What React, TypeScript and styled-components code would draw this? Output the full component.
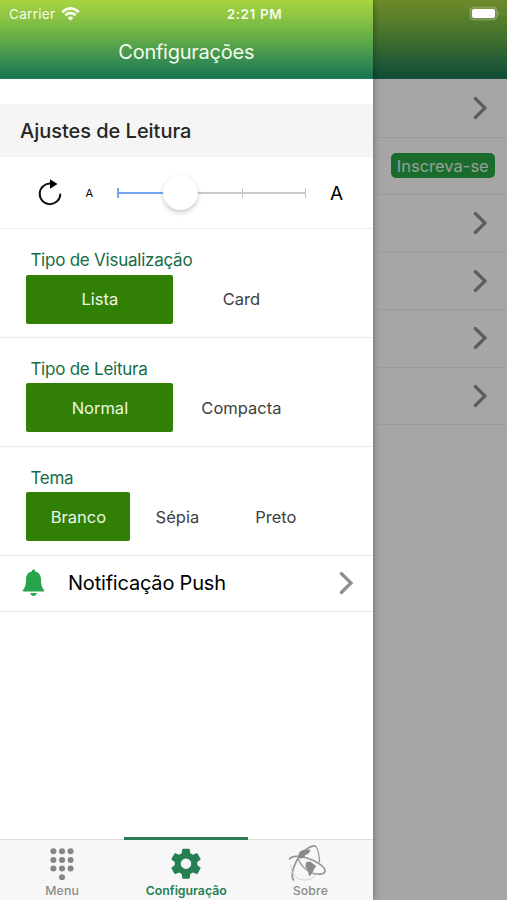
import React from 'react';
import styled, { createGlobalStyle, css } from 'styled-components';

const Global = createGlobalStyle`
  * { box-sizing: border-box; }
  body { margin: 0; background: #fff; font-family: Inter, "Liberation Sans", sans-serif; }
`;

const headerGradient = css`
  background: linear-gradient(180deg, #a9d43f 0%, #8ec643 20%, #62ab48 50%, #338a52 80%, #187650 98%, #2c8060 100%);
`;

const Screen = styled.div`
  position: relative;
  display: grid;
  grid-template-columns: 372.5px 1fr;
  height: 900px;
  width: 507px;
  overflow: hidden;
`;

const StatusBar = styled.div`
  position: absolute;
  inset: 0 0 auto 0;
  z-index: 3;
  height: 27px;
  display: grid;
  grid-template-columns: 1fr auto 1fr;
  align-items: center;
  padding: 0 7px 0 9px;
  color: #f6fbe8;
  font-size: 13.5px;
`;

const Carrier = styled.div`
  display: flex;
  align-items: center;
  gap: 6px;
  letter-spacing: 0.3px;
`;

const Clock = styled.div`
  font-weight: 600;
  font-size: 13.5px;
  letter-spacing: 0.6px;
`;

const Battery = styled.div`
  justify-self: end;
  display: flex;
`;

const Drawer = styled.div`
  position: relative;
  z-index: 2;
  background: #fff;
  display: flex;
  flex-direction: column;
  box-shadow: 0 0 7px rgba(0, 0, 0, 0.4);
`;

const Header = styled.header`
  ${headerGradient}
  height: 79px;
  flex: none;
  padding-top: 25px;
  display: flex;
  align-items: center;
  justify-content: center;
  color: #f4fae9;
  font-size: 20px;
`;

const Title = styled.span<{ $track?: number }>`
  letter-spacing: ${p => p.$track ?? 0}px;
  white-space: nowrap;
`;

const Content = styled.main`
  flex: 1;
  padding-top: 25px;
`;

const SectionHeading = styled.div`
  height: 53px;
  background: #f5f5f5;
  padding: 0 20px;
  display: flex;
  align-items: center;
  font-size: 20px;
  font-weight: 500;
  color: #262626;
`;

const FontRow = styled.div`
  height: 72px;
  border-bottom: 1px solid #ededed;
  display: grid;
  grid-template-columns: 24px 31px 237px auto;
  justify-content: start;
  align-items: center;
  padding: 1px 0 0 38px;
`;

const Letter = styled.span<{ $size: number }>`
  font-size: ${p => p.$size}px;
  color: #000;
  justify-self: end;
`;

const Track = styled.div`
  position: relative;
  width: 189px;
  height: 40px;
  margin-left: 24px;
  display: flex;
  align-items: center;
`;

const Segment = styled.div<{ $active?: boolean }>`
  flex: 1;
  height: 2px;
  background: ${p => (p.$active ? '#74a5f5' : '#cbcbcb')};
`;

const Tick = styled.div<{ $active?: boolean }>`
  width: 1.5px;
  height: 10px;
  background: ${p => (p.$active ? '#74a5f5' : '#c4c4c4')};
`;

const Knob = styled.div`
  position: absolute;
  left: 46px;
  top: 2px;
  width: 35px;
  height: 35px;
  border-radius: 50%;
  background: #fff;
  box-shadow: 0 3px 5px rgba(0, 0, 0, 0.18), 0 0 3px rgba(0, 0, 0, 0.06);
`;

const Group = styled.section`
  height: 108.9px;
  border-bottom: 1px solid #ebebeb;
  padding: 20px 26.4px 0;
`;

const GroupLabel = styled.div`
  height: 25.5px;
  padding-left: 4px;
  font-size: 17px;
  line-height: 23px;
  letter-spacing: -0.24px;
  color: #176b45;
`;

const Options = styled.div`
  display: flex;
`;

const Option = styled.button<{ $width: number; $selected?: boolean }>`
  width: ${p => p.$width}px;
  height: 49px;
  border: 0;
  border-radius: 2px;
  padding: 0;
  font: inherit;
  font-size: 16.5px;
  background: ${p => (p.$selected ? '#318005' : 'transparent')};
  color: ${p => (p.$selected ? '#eef6e8' : '#404040')};
`;

const PushRow = styled.div`
  height: 56px;
  border-bottom: 1px solid #ebebeb;
  display: flex;
  align-items: center;
  padding: 0 19px 0 22px;
  font-size: 20px;
  color: #000;
`;

const PushLabel = styled.span`
  flex: 1;
  margin-left: 22px;
  letter-spacing: -0.2px;
  white-space: nowrap;
`;

const TabBar = styled.nav`
  flex: none;
  height: 61px;
  display: grid;
  grid-template-columns: repeat(3, 1fr);
  background: #f7f7f7;
  border-top: 1px solid #dcdcdc;
`;

const Tab = styled.div<{ $active?: boolean }>`
  position: relative;
  display: flex;
  flex-direction: column;
  align-items: center;
  justify-content: flex-end;
  padding-bottom: 2px;
  font-size: 12.3px;
  line-height: 15px;
  font-weight: ${p => (p.$active ? 600 : 500)};
  color: ${p => (p.$active ? '#248052' : '#8c8c8c')};
  &::before {
    content: '';
    position: absolute;
    inset: -3px 0 auto 0;
    height: 3px;
    background: ${p => (p.$active ? '#2f7d54' : 'transparent')};
  }
`;

const TabLabel = styled.span`
  letter-spacing: 0.1px;
`;

const Page = styled.div`
  position: relative;
  background: #fff;
`;

const PageHeader = styled.div`
  ${headerGradient}
  height: 79px;
`;

const PageList = styled.div`
  padding-top: 1px;
`;

const PageRow = styled.div`
  height: 57.5px;
  border-bottom: 1px solid #f0f0f0;
  display: flex;
  align-items: center;
  justify-content: flex-end;
  padding: 0 19px 0 0;
`;

const BadgeRow = styled(PageRow)`
  padding-right: 12px;
`;

const Badge = styled.span`
  width: 104.5px;
  height: 25px;
  border-radius: 5px;
  background: #28a745;
  color: #e9f3e6;
  display: flex;
  align-items: center;
  justify-content: center;
  font-size: 16.5px;
`;

const Backdrop = styled.div`
  position: absolute;
  inset: 0;
  background: rgba(0, 0, 0, 0.35);
`;

const Chevron = () => (
  <svg width="15" height="24" viewBox="0 0 15 24" fill="none" stroke="#8f8f8f" strokeWidth="3.2">
    <path d="M2.3 2.5 12 12 2.3 21.5" strokeLinecap="round" />
  </svg>
);

const Wifi = () => (
  <svg width="19" height="14" viewBox="0 0 19 14" fill="none" stroke="#f8fcec" strokeWidth="2.8">
    <path d="M1.2 5.1Q9.5-2.3 17.8 5.1" />
    <path d="M4.2 8.3Q9.5 3.8 14.8 8.3" />
    <path d="M6.7 10.8Q9.5 8.4 12.3 10.8L9.5 13.7Z" fill="#f8fcec" stroke="none" />
  </svg>
);

const BatteryIcon = () => (
  <svg width="31" height="15" viewBox="0 0 31 15">
    <rect x="1" y="1" width="27" height="13" rx="4" fill="#fff" fillOpacity=".15" stroke="#fff" strokeOpacity=".2" strokeWidth="1.2" />
    <rect x="3" y="3" width="23" height="9" rx="2" fill="#fff" />
    <path d="M29 5q2 2.5 0 5z" fill="#fff" fillOpacity=".35" />
  </svg>
);

const Reload = () => (
  <svg width="24" height="28" viewBox="0 0 24 28">
    <path d="M13 4.600A10.300 10.300 0 1 0 22.300 15.500" fill="none" stroke="#111" strokeWidth="2" strokeLinecap="round" />
    <path d="M12 .2 19.500 5 12 9.700Z" fill="#000" />
  </svg>
);

const Bell = () => (
  <svg width="24" height="28" viewBox="0 0 24 28" fill="#28a44c">
    <path d="M11.5.6c-1.1 0-1.7.8-1.7 1.9C5.8 3.4 4 6.5 4 10.3c0 5.8-.9 8.2-3.2 10.9-.4.7 0 1.2.7 1.2h20c.7 0 1.1-.5.7-1.2-2.3-2.7-3.2-5.1-3.2-10.9 0-3.8-1.8-6.9-5.8-7.8 0-1.1-.6-1.9-1.7-1.9Z" />
    <path d="M8.2 24h6.6c-.5 1.9-1.7 2.9-3.3 2.9S8.7 25.9 8.2 24Z" />
  </svg>
);

const Keypad = () => (
  <svg width="26" height="36" viewBox="0 0 26 36" fill="#858585">
    {[4.2, 12.9, 21.5].flatMap(y => [4.4, 13, 21.6].map(x => <circle key={`${x}-${y}`} cx={x} cy={y} r="3" />))}
    <circle cx="13" cy="30.2" r="3" />
  </svg>
);

const Gear = () => (
  <svg width="36" height="36" viewBox="0 0.9 24 24" fill="#248052">
    <path d="M19.43 12.98c.04-.32.07-.64.07-.98s-.03-.66-.07-.98l2.11-1.65c.19-.15.24-.42.12-.64l-2-3.46c-.12-.22-.39-.3-.61-.22l-2.49 1c-.52-.4-1.08-.73-1.69-.98l-.38-2.65C14.46 2.18 14.25 2 14 2h-4c-.25 0-.46.18-.49.42l-.38 2.65c-.61.25-1.17.59-1.69.98l-2.49-1c-.23-.09-.49 0-.61.22l-2 3.46c-.13.22-.07.49.12.64l2.11 1.65c-.04.32-.07.65-.07.98s.03.66.07.98l-2.11 1.65c-.19.15-.24.42-.12.64l2 3.46c.12.22.39.3.61.22l2.49-1c.52.4 1.08.73 1.69.98l.38 2.65c.03.24.24.42.49.42h4c.25 0 .46-.18.49-.42l.38-2.65c.61-.25 1.17-.59 1.69-.98l2.49 1c.23.09.49 0 .61-.22l2-3.46c.12-.22.07-.49-.12-.64l-2.11-1.65ZM12 15.5a3.5 3.5 0 1 1 0-7 3.5 3.5 0 0 1 0 7Z" />
  </svg>
);

const Globe = () => (
  <svg width="44" height="38" viewBox="0 0 44 38" fill="none" stroke="#969696">
    <path d="M1.300 14.500C3 10.500 12 10.800 19 13c9 2.800 18 8.500 18 12.800 0 3.700-5 4-12 2.700" strokeWidth="1.700" />
    <path d="M28 1.500C24-1 15 5.500 9 15 4.500 23 2.500 33 6 35.500" strokeWidth="1.700" />
    <path d="M28 1.500c2.500 4 3.500 10 3.500 16M10 13c2 7 7 12 15 15.500" strokeWidth="1.200" />
    <path d="M3 20c0 9 5 14 12 15 6 .5 11-2 14-6" stroke="#cccccc" strokeWidth=".9" />
    <path d="m10.500 11 1.500-4 4-2 6 .3-2 3.200-3 1-1 2.500-3 1-2-.5Z" fill="#898989" stroke="#898989" />
    <path d="m18.500 17.500 4-.5 2 2 3 2-2 3.500-1 2-3 4.500-1-5.500-2.500-3.500Z" fill="#898989" stroke="#898989" />
  </svg>
);

export default function App() {
  return (
    <>
      <Global />
      <Screen>
        <StatusBar>
          <Carrier>Carrier <Wifi /></Carrier>
          <Clock>2:21 PM</Clock>
          <Battery><BatteryIcon /></Battery>
        </StatusBar>
        <Drawer>
          <Header><Title $track={-0.25}>Configurações</Title></Header>
          <Content>
            <SectionHeading><Title $track={-0.03}>Ajustes de Leitura</Title></SectionHeading>
            <FontRow>
              <Reload />
              <Letter $size={11}>A</Letter>
              <Track>
                <Tick $active />
                <Segment $active />
                <Segment />
                <Tick />
                <Segment />
                <Tick />
                <Knob />
              </Track>
              <Letter $size={19}>A</Letter>
            </FontRow>
            <Group>
              <GroupLabel>Tipo de Visualização</GroupLabel>
              <Options>
                <Option $width={147} $selected>Lista</Option>
                <Option $width={136}>Card</Option>
              </Options>
            </Group>
            <Group>
              <GroupLabel>Tipo de Leitura</GroupLabel>
              <Options>
                <Option $width={147} $selected>Normal</Option>
                <Option $width={136}>Compacta</Option>
              </Options>
            </Group>
            <Group>
              <GroupLabel>Tema</GroupLabel>
              <Options>
                <Option $width={104} $selected>Branco</Option>
                <Option $width={94}>Sépia</Option>
                <Option $width={103}>Preto</Option>
              </Options>
            </Group>
            <PushRow>
              <Bell />
              <PushLabel>Notificação Push</PushLabel>
              <Chevron />
            </PushRow>
          </Content>
          <TabBar>
            <Tab><Keypad /><TabLabel>Menu</TabLabel></Tab>
            <Tab $active><Gear />Configuração</Tab>
            <Tab><Globe /><TabLabel>Sobre</TabLabel></Tab>
          </TabBar>
        </Drawer>
        <Page>
          <PageHeader />
          <PageList>
            <PageRow><Chevron /></PageRow>
            <BadgeRow><Badge>Inscreva-se</Badge></BadgeRow>
            <PageRow><Chevron /></PageRow>
            <PageRow><Chevron /></PageRow>
            <PageRow><Chevron /></PageRow>
            <PageRow><Chevron /></PageRow>
          </PageList>
          <Backdrop />
        </Page>
      </Screen>
    </>
  );
}
